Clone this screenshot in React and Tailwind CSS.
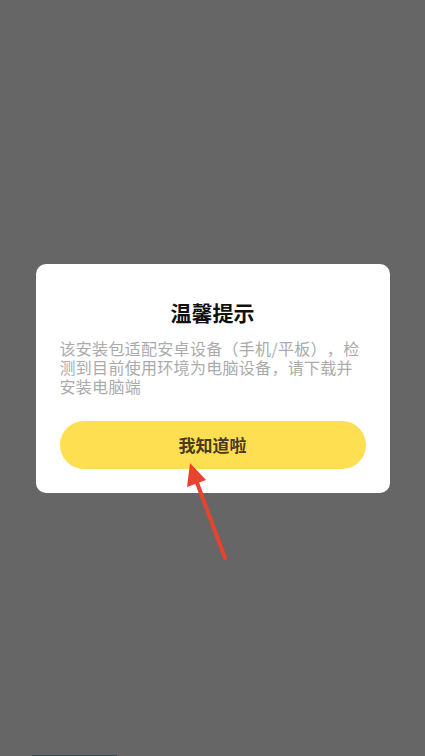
export default function App() {
  return (
    <div
      className="relative flex h-[756px] w-full items-center justify-center overflow-hidden bg-[#666666]"
      style={{ fontFamily: '"Noto Sans CJK SC", "Noto Sans", sans-serif' }}
    >
      <div className="flex w-[354px] flex-col rounded-[10px] bg-white px-[24px] pb-[24px] pt-[34px]">
        <h1 className="text-center text-[21px] font-bold leading-[28px] text-[#111111]">
          温馨提示
        </h1>
        <p className="mt-[13px] text-[16px] leading-[19px] tracking-[0.3px] text-[#ababab] [text-spacing-trim:space-all]">
          该安装包适配安卓设备（手机/平板），检测到目前使用环境为电脑设备，请下载并安装电脑端
        </p>
        <button className="mt-[25px] flex h-[48px] w-full items-center justify-center rounded-full bg-[#ffdf52] text-[17px] font-bold text-[#4a3820]">
          我知道啦
        </button>
      </div>

      <svg
        className="pointer-events-none absolute left-0 top-0"
        width="425"
        height="756"
        viewBox="0 0 425 756"
      >
        <line
          x1="225"
          y1="558"
          x2="196"
          y2="480"
          stroke="#e8432f"
          strokeWidth="4"
          strokeLinecap="round"
        />
        <polygon points="190,463 206,480 187,487" fill="#e8432f" />
      </svg>

      <div className="absolute bottom-0 left-[32px] h-[1px] w-[85px] bg-[#2b4f4a]" />
    </div>
  );
}
